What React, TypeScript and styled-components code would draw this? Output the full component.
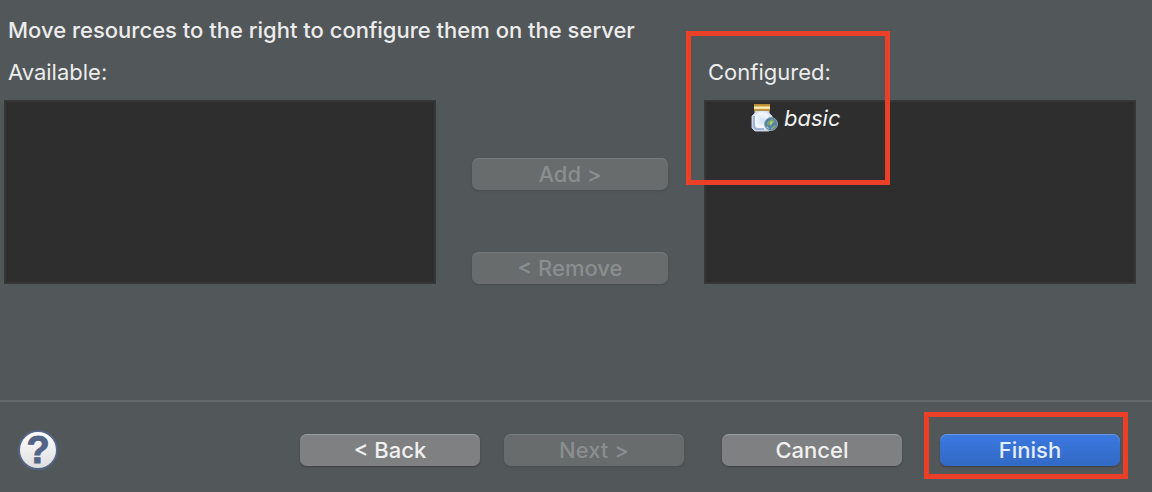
import React from "react";
import styled, { createGlobalStyle, css } from "styled-components";

const GlobalStyle = createGlobalStyle`
  * { box-sizing: border-box; }
  body {
    margin: 0;
    background: #525759;
    color: #ececec;
    font-family: Inter, "Liberation Sans", sans-serif;
    font-size: 22px;
    font-weight: 450;
    line-height: 28px;
  }
`;

const Dialog = styled.form`
  display: flex;
  flex-direction: column;
  min-height: 100vh;
`;

const Content = styled.main`
  flex: 1;
  padding: 16px 16px 24px 4px;
`;

const Intro = styled.p`
  margin: 0 0 14px;
  padding: 0 4px;
`;

const Columns = styled.div`
  display: grid;
  grid-template-columns: 1fr 196px 1fr;
  column-gap: 36px;
`;

const Column = styled.section`
  position: relative;
`;

const ListLabel = styled.h2`
  margin: 0 0 14px;
  padding: 0 4px;
  font-size: 22px;
  font-weight: 400;
  line-height: 28px;
`;

const ResourceList = styled.ul`
  height: 184px;
  margin: 0;
  padding: 0;
  list-style: none;
  background: #2e2e2e;
  border: 2px solid #363737;
`;

const Resource = styled.li`
  display: flex;
  align-items: center;
  gap: 2px;
  height: 32px;
  padding-left: 44px;
  color: #f2f2f2;
  font-style: italic;
  font-weight: 400;
`;

const Transfer = styled.div`
  display: flex;
  flex-direction: column;
  justify-content: flex-end;
  gap: 62px;
`;

const Footer = styled.footer`
  display: flex;
  align-items: center;
  gap: 38px;
  padding: 32px 32px 26px 18px;
  border-top: 2px solid #64696b;
`;

const StepButtons = styled.div`
  display: flex;
  gap: 24px;
  margin-left: auto;
`;

const PushButton = styled.button<{ $primary?: boolean }>`
  width: 100%;
  height: 32px;
  padding: 0;
  border: 0;
  border-radius: 7px;
  background: #7e8081;
  box-shadow: inset 0 1px #999b9c, 0 1px 2px #3d4143;
  color: #f0f0f0;
  font: inherit;

  ${Footer} & {
    width: 180px;
  }

  &:disabled {
    background: #686c6d;
    box-shadow: inset 0 1px #757a7b, 0 1px 2px #484d4f;
    color: #8b8e90;
  }

  ${(p) =>
    p.$primary &&
    css`
      background: linear-gradient(#3b79e0, #3269c4);
      box-shadow: inset 0 1px #6797e6, 0 1px 2px #3d4143;
      color: #e4edfb;
    `}
`;

const HelpButton = styled.button`
  width: 40px;
  height: 40px;
  margin: -4px 0;
  padding: 0;
  border: 2px solid #536487;
  border-radius: 50%;
  background: linear-gradient(#ffffff, #dedede);
  color: #536487;
  font: bold 38px/36px "Liberation Sans", sans-serif;
  -webkit-text-stroke: 1px #536487;
`;

const FinishArea = styled.div`
  position: relative;
`;

const Highlight = styled.div<{ $inset: string }>`
  position: absolute;
  inset: ${(p) => p.$inset};
  border: 5px solid #eb4027;
  pointer-events: none;
`;

const ConfiguredHighlight = styled(Highlight)`
  right: auto;
  bottom: auto;
  width: 204px;
  height: 154px;
`;

function ModuleIcon() {
  return (
    <svg width="32" height="32" viewBox="0 0 32 32" aria-hidden="true">
      <defs>
        <radialGradient id="jar" cx="0.5" cy="0.5" r="0.65">
          <stop offset="0" stopColor="#cfe0f8" />
          <stop offset="0.5" stopColor="#f4f8fe" />
          <stop offset="1" stopColor="#b9c9e6" />
        </radialGradient>
        <linearGradient id="lid" x1="0" y1="0" x2="0" y2="1">
          <stop offset="0" stopColor="#b8892c" />
          <stop offset="0.28" stopColor="#c99a3c" />
          <stop offset="0.45" stopColor="#fbf0c8" />
          <stop offset="0.65" stopColor="#f3e0a0" />
          <stop offset="0.8" stopColor="#b98a2a" />
          <stop offset="1" stopColor="#b8924a" />
        </linearGradient>
      </defs>
      <path d="M5 8h14v3l3 3v12l-3 3H5l-3-3V14l3-3z" fill="url(#jar)" stroke="#c3cad3" strokeWidth="1" />
      <path d="M4 14v11l2 2h8" stroke="#8aa4d4" strokeWidth="1.5" fill="none" />
      <rect x="4" y="2" width="16" height="7" fill="url(#lid)" />
      <circle cx="21" cy="22" r="6.5" fill="#5080a8" stroke="#8fabb0" strokeWidth="1" />
      <path d="M17 20l3-2 3-1 2 3-3 1-1 3-2-1-2 1z" fill="#78a56c" />
      <path d="M20 20l3-1-1 3-2 1z" fill="#bccb76" />
      <path d="M21 26l4-3 1 1-3 3-2 1z" fill="#8bab72" />
      <path d="M16 24l2 1 2 2-3-1z" fill="#a3c2dc" />
    </svg>
  );
}

export default function App() {
  return (
    <>
      <GlobalStyle />
      <Dialog onSubmit={(e: React.FormEvent) => e.preventDefault()}>
        <Content>
          <Intro>Move resources to the right to configure them on the server</Intro>
          <Columns>
            <Column>
              <ListLabel id="available">Available:</ListLabel>
              <ResourceList aria-labelledby="available" />
            </Column>
            <Transfer>
              <PushButton type="button" disabled>Add &gt;</PushButton>
              <PushButton type="button" disabled>&lt; Remove</PushButton>
            </Transfer>
            <Column>
              <ListLabel id="configured">Configured:</ListLabel>
              <ResourceList aria-labelledby="configured">
                <Resource>
                  <ModuleIcon />
                  basic
                </Resource>
              </ResourceList>
              <ConfiguredHighlight $inset="-27px auto auto -18px" />
            </Column>
          </Columns>
        </Content>
        <Footer>
          <HelpButton type="button" aria-label="Help">?</HelpButton>
          <StepButtons>
            <PushButton type="button">&lt; Back</PushButton>
            <PushButton type="button" disabled>Next &gt;</PushButton>
          </StepButtons>
          <PushButton type="button">Cancel</PushButton>
          <FinishArea>
            <PushButton type="submit" $primary>Finish</PushButton>
            <Highlight $inset="-22px -8px -13px -16px" />
          </FinishArea>
        </Footer>
      </Dialog>
    </>
  );
}
